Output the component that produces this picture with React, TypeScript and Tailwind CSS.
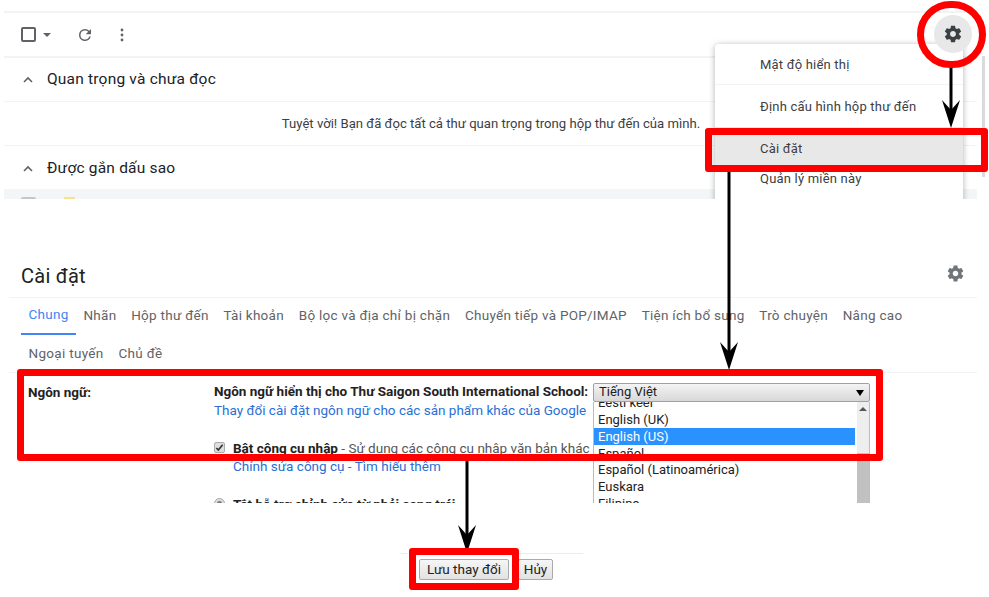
import React from "react";

const Gear = ({ className }: { className: string }) => (
  <svg viewBox="0 0 24 24" className={className} fill="currentColor">
    <path d="M19.43 12.98c.04-.32.07-.64.07-.98s-.03-.66-.07-.98l2.11-1.65c.19-.15.24-.42.12-.64l-2-3.46c-.12-.22-.39-.3-.61-.22l-2.49 1c-.52-.4-1.08-.73-1.69-.98l-.38-2.65C14.46 2.18 14.25 2 14 2h-4c-.25 0-.46.18-.49.42l-.38 2.65c-.61.25-1.17.59-1.69.98l-2.49-1c-.23-.09-.49 0-.61.22l-2 3.46c-.13.22-.07.49.12.64l2.11 1.65c-.04.32-.07.65-.07.98s.03.66.07.98l-2.11 1.65c-.19.15-.24.42-.12.64l2 3.46c.12.22.39.3.61.22l2.49-1c.52.4 1.08.73 1.69.98l.38 2.65c.03.24.24.42.49.42h4c.25 0 .46-.18.49-.42l.38-2.65c.61-.25 1.17-.59 1.69-.98l2.49 1c.23.09.49 0 .61-.22l2-3.46c.12-.22.07-.49-.12-.64l-2.11-1.65zM12 15.5c-1.93 0-3.5-1.57-3.5-3.5s1.57-3.5 3.5-3.5 3.5 1.57 3.5 3.5-1.57 3.5-3.5 3.5z" />
  </svg>
);

const Chevron = () => (
  <svg viewBox="0 0 12 8" className="w-[12px] h-[8px] text-[#5f6368]" fill="none" stroke="currentColor" strokeWidth="1.6">
    <path d="M2 6l4-4 4 4" />
  </svg>
);

const Arrow = ({ x, y1, y2 }: { x: number; y1: number; y2: number }) => (
  <>
    <path d={`M${x} ${y1}V${y2 - 14}`} stroke="#000" strokeWidth="3" fill="none" />
    <path d={`M${x} ${y2}L${x - 9} ${y2 - 28}L${x} ${y2 - 18}L${x + 9} ${y2 - 28}Z`} fill="#000" />
  </>
);

const tabs1 = ["Nhãn", "Hộp thư đến", "Tài khoản", "Bộ lọc và địa chỉ bị chặn", "Chuyển tiếp và POP/IMAP", "Tiện ích bổ sung", "Trò chuyện", "Nâng cao"];

const SectionHead = ({ label, className }: { label: string; className: string }) => (
  <div className={`flex items-center pl-[18px] gap-[13px] ${className}`}>
    <Chevron />
    <span className="text-[15.5px] text-[#202124] tracking-[0.2px]">{label}</span>
  </div>
);

function TopPanel() {
  return (
    <div className="relative h-[199px] overflow-hidden pt-[11px]">
      <div className="ml-[4px] mr-[12px] flex flex-col">
        <div className="h-[2px] bg-[#f1f3f4]" />
        <div className="h-[43px] flex items-center pl-[17px] text-[#5f6368]">
          <div className="w-[15px] h-[15px] border-2 border-[#5f6368] rounded-[2px]" />
          <div className="ml-[7px] w-0 h-0 border-x-[4px] border-x-transparent border-t-[4px] border-t-[#5f6368]" />
          <svg viewBox="0 0 24 24" className="ml-[25px] w-[18px] h-[18px]" fill="currentColor">
            <path d="M17.65 6.35A7.96 7.96 0 0 0 12 4a8 8 0 1 0 7.73 10h-2.08A6 6 0 1 1 12 6c1.66 0 3.14.69 4.22 1.78L13 11h7V4l-2.35 2.35z" />
          </svg>
          <svg viewBox="0 0 4 14" className="ml-[26px] w-[4px] h-[14px]" fill="currentColor">
            <circle cx="2" cy="2" r="1.4" />
            <circle cx="2" cy="7" r="1.4" />
            <circle cx="2" cy="12" r="1.4" />
          </svg>
        </div>
        <div className="h-[2px] bg-[#f1f3f4]" />
        <SectionHead label="Quan trọng và chưa đọc" className="h-[43px]" />
        <div className="h-[1px] bg-[#f1f3f4]" />
        <div className="h-[43px] flex items-center justify-center pl-[278px] pr-[277px] text-[13.13px] text-[#3c4043] whitespace-nowrap">
          Tuyệt vời! Bạn đã đọc tất cả thư quan trọng trong hộp thư đến của mình.
        </div>
        <div className="h-[1px] bg-[#f1f3f4]" />
        <SectionHead label="Được gắn dấu sao" className="h-[43px] pt-[2px]" />
        <div className="h-[12px] bg-[#f2f6f6] flex items-start pl-[17px] pt-[8px] gap-[28px]">
          <div className="w-[15px] h-[15px] border-2 border-[#c4c7c9] rounded-[2px]" />
          <div className="w-[11px] h-[4px] bg-[#fbe28a]" />
        </div>
      </div>
      <div className="absolute left-[982px] top-[56px] w-[3px] h-[121px] bg-[#dadada]" />
      <div className="absolute left-[715px] top-[44px] w-[248px] h-[160px] bg-white rounded-t-[4px] shadow-[0_1px_6px_rgba(60,64,67,0.4)] text-[13px] text-[#3c4043] tracking-[0.2px] flex flex-col">
        <div className="h-[41px] flex items-center pl-[45px] pt-[1px] border-b border-[#f1f3f4]">Mật độ hiển thị</div>
        <div className="h-[42px] flex items-center pl-[45px] pt-[1px]">Định cấu hình hộp thư đến</div>
        <div className="h-[40px] flex items-center pl-[45px] pt-[4px] bg-[#e8e8e8]">Cài đặt</div>
        <div className="h-[24px] flex items-center pl-[45px]">Quản lý miền này</div>
      </div>
      <div className="absolute left-[934px] top-[15px] w-[38px] h-[38px] rounded-full bg-[#e8e8e8] flex items-center justify-center text-[#3c4043]">
        <Gear className="w-[20px] h-[20px]" />
      </div>
    </div>
  );
}

function SettingsPanel() {
  return (
    <div className="mt-[63px] h-[241px] overflow-hidden ml-[9px] mr-[12px] font-['Roboto',sans-serif]">
      <div className="h-[35px] flex items-center justify-between pl-[12px] pr-[12px]">
        <span className="text-[20px] text-[#202124] tracking-[0.25px] pb-[7px]">Cài đặt</span>
        <Gear className="w-[19px] h-[19px] text-[#70757a] mb-[13px]" />
      </div>
      <div className="h-[1px] bg-[#f1f3f4]" />
      <div className="text-[13.5px] text-[#5f6368] tracking-[0.27px] flex pl-[12px]">
        <div className="h-[37px] px-[7.5px] pb-[2px] flex items-center text-[#4285f4] border-b-[2px] border-[#4285f4]">Chung</div>
        {tabs1.map((t) => (
          <div key={t} className="h-[37px] px-[7.4px] pb-[2px] flex items-center whitespace-nowrap">{t}</div>
        ))}
      </div>
      <div className="text-[13.5px] text-[#5f6368] tracking-[0.3px] flex pl-[12px]">
        <div className="h-[37px] px-[7.5px] flex items-center">Ngoại tuyến</div>
        <div className="h-[37px] px-[7.5px] flex items-center">Chủ đề</div>
      </div>
      <div className="h-[1px] bg-[#f1f3f4]" />
      <div className="flex pl-[19px] pt-[9px] text-[13.5px] text-[#222]">
        <div className="w-[186px] font-bold">Ngôn ngữ:</div>
        <div className="flex-1 relative">
          <div className="font-bold whitespace-nowrap leading-[18px]">Ngôn ngữ hiển thị cho Thư Saigon South International School:</div>
          <div className="text-[#2a6fd6] whitespace-nowrap leading-[18px] mt-[1px]">Thay đổi cài đặt ngôn ngữ cho các sản phẩm khác của Google</div>
          <div className="mt-[20px] flex items-start gap-[8px]">
            <div className="w-[11px] h-[11px] mt-[3px] bg-[#ddd] border border-[#aaa] rounded-[2px] flex items-center justify-center">
              <svg viewBox="0 0 10 10" className="w-[9px] h-[9px]" fill="none" stroke="#333" strokeWidth="1.8"><path d="M1.5 5.5l2.2 2.2L8.5 2" /></svg>
            </div>
            <div className="whitespace-nowrap leading-[18px]">
              <div><b>Bật công cụ nhập</b> <span className="text-[#555]">- Sử dụng các công cụ nhập văn bản khác</span></div>
              <div className="text-[#2a6fd6]">Chỉnh sửa công cụ - Tìm hiểu thêm</div>
            </div>
          </div>
          <div className="mt-[20px] flex items-start gap-[8px]">
            <div className="w-[11px] h-[11px] mt-[3px] rounded-full border border-[#aaa] bg-[#ddd] flex items-center justify-center">
              <div className="w-[5px] h-[5px] rounded-full bg-[#777]" />
            </div>
            <b className="whitespace-nowrap leading-[18px]">Tắt hỗ trợ chỉnh sửa từ phải sang trái</b>
          </div>
          <div className="absolute left-[379px] top-[1px] w-[277px] text-[13px] text-[#222]">
            <div className="h-[19px] rounded-[2px] border border-[#7ea6e0] bg-gradient-to-b from-[#f4f4f4] to-[#d8d8d8] flex items-center justify-between pl-[5px] pr-[5px]">
              <span className="pb-[2px]">Tiếng Việt</span>
              <span className="w-0 h-0 border-x-[4px] border-x-transparent border-t-[6px] border-t-black" />
            </div>
            <div className="h-[112px] overflow-hidden border-x border-[#a9c0e6] bg-white relative">
              <div className="pl-[4px] -mt-[8px] leading-[17px]">
                <div className="h-[17px]">Eesti keel</div>
                <div className="h-[17px]">English (UK)</div>
                <div className="h-[17px] bg-[#2a92ff] text-white -ml-[4px] pl-[4px] mr-[14px]">English (US)</div>
                <div className="h-[16px]">Español</div>
                <div className="h-[17px]">Español (Latinoamérica)</div>
                <div className="h-[17px]">Euskara</div>
                <div className="h-[17px]">Filipino</div>
              </div>
              <div className="absolute right-0 top-0 bottom-0 w-[12px] bg-[#eeeeee] flex flex-col items-center pt-[5px]">
                <div className="w-0 h-0 border-x-[4px] border-x-transparent border-b-[4px] border-b-[#555]" />
                <div className="mt-[42px] w-full flex-1 bg-[#c1c1c1]" />
              </div>
            </div>
          </div>
        </div>
      </div>
    </div>
  );
}

function BottomBar() {
  return (
    <div className="mt-[50px] ml-[401px] mr-[406px] pl-[18px] h-[40px] border-t border-[#ececec] flex items-start pt-[5px] gap-[9px] text-[13.5px] text-[#222] font-['Roboto',sans-serif]">
      <div className="w-[90px] h-[21px] flex items-center justify-center border border-[#aaa] rounded-[2px] bg-gradient-to-b from-[#f6f6f6] to-[#e2e2e2] whitespace-nowrap">Lưu thay đổi</div>
      <div className="w-[35px] h-[21px] flex items-center justify-center border border-[#aaa] rounded-[2px] bg-gradient-to-b from-[#f6f6f6] to-[#e2e2e2]">Hủy</div>
    </div>
  );
}

export default function App() {
  return (
    <div className="relative w-[989px] h-[597px] overflow-hidden bg-white font-['Roboto',sans-serif]">
      <TopPanel />
      <SettingsPanel />
      <BottomBar />
      <svg className="absolute left-0 top-0 w-[989px] h-[597px] pointer-events-none" viewBox="0 0 989 597">
        <Arrow x={951} y1={66} y2={128} />
        <Arrow x={729} y1={171} y2={370} />
        <Arrow x={467} y1={460} y2={553} />
      </svg>
      <div className="absolute left-[917px] top-[1px] w-[69px] h-[67px] rounded-full border-[7px] border-[#ff0000]" />
      <div className="absolute left-[705px] top-[128px] w-[283px] h-[44px] rounded-[3px] border-[7px] border-[#ff0000]" />
      <div className="absolute left-[17px] top-[369px] w-[866px] h-[92px] rounded-[3px] border-[7px] border-[#ff0000]" />
      <div className="absolute left-[409px] top-[548px] w-[110px] h-[42px] rounded-[3px] border-[7px] border-[#ff0000]" />
    </div>
  );
}
